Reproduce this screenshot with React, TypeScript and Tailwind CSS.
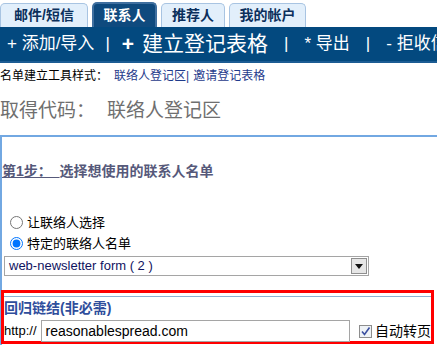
import React from "react";

const font = { fontFamily: '"Liberation Sans", "Noto Sans CJK SC", sans-serif' };

function Tab({ label, width, active }: { label: string; width: string; active?: boolean }) {
    if (active) {
        return (
            <div className={`${width} h-[25px] flex items-center justify-center rounded-t-[5px] bg-[#0f4a7e] border-2 border-b-0 border-[#3f6f9f] text-white font-bold text-[14px]`}>
                {label}
            </div>
        );
    }
    return (
        <div className={`${width} h-[24px] flex items-center justify-center rounded-t-[5px] bg-[#e2effb] border border-b-0 border-[#a8c4e2] text-[#0b2f5c] font-bold text-[14px]`}>
            {label}
        </div>
    );
}

export default function App() {
    return (
        <div className="w-[437px] h-[347px] overflow-hidden bg-white text-black" style={font}>
            {/* tabs */}
            <div className="h-[27px] flex items-end gap-[4px]">
                <Tab label="邮件/短信" width="w-[88px]" />
                <Tab label="联系人" width="w-[65px]" active />
                <Tab label="推荐人" width="w-[64px]" />
                <Tab label="我的帐户" width="w-[77px]" />
            </div>

            {/* action bar */}
            <div className="h-[36px] bg-[#03497f] border-b-2 border-[#1c5c93] flex items-center whitespace-nowrap text-white pl-[7px]">
                <span className="text-[17px]">+ 添加/导入</span>
                <span className="text-[17px] ml-[11px] mr-[12px]">|</span>
                <span className="text-[21px] font-bold mr-[6px]">+</span>
                <span className="text-[21px] ml-[2px]">建立登记表格</span>
                <span className="text-[17px] mx-[16px]">|</span>
                <span className="text-[17px]">* 导出</span>
                <span className="text-[17px] mx-[16px]">|</span>
                <span className="text-[17px]">- 拒收信件</span>
            </div>

            {/* sub links */}
            <div className="h-[26px] flex items-center text-[12px] whitespace-nowrap">
                <span>名单建立工具样式：</span>
                <span className="ml-[6px] text-[#1f3b8c]">联络人登记区</span>
                <span className="text-[#1f3b8c]">|</span>
                <span className="ml-[4px] text-[#1f3b8c]">邀请登记表格</span>
            </div>

            <div className="h-[44px] flex items-center text-[19px] text-[#6f6f6f] whitespace-nowrap">
                <span>取得代码：</span>
                <span className="ml-[12px]">联络人登记区</span>
            </div>

            {/* step box */}
            <div className="mt-[2px] border-t-2 border-l-2 border-[#72a8e2] h-[210px]">
                <div className="mt-[24px] text-[14px] font-bold text-[#56597a] whitespace-nowrap">
                    <span className="underline">第1步：&nbsp;&nbsp;</span>
                    <span>选择想使用的联系人名单</span>
                </div>

                <div className="mt-[32px] flex flex-col gap-[4px] pl-[8px] text-[13px]">
                    <label className="flex items-center gap-[4px] h-[17px]">
                        <input type="radio" name="pick" className="w-[13px] h-[13px] m-0" />
                        <span>让联络人选择</span>
                    </label>
                    <label className="flex items-center gap-[4px] h-[17px]">
                        <input type="radio" name="pick" defaultChecked className="w-[13px] h-[13px] m-0" />
                        <span>特定的联络人名单</span>
                    </label>
                </div>

                <div className="mt-[4px] ml-[2px] w-[365px] h-[20px] border border-[#a5a5a5] flex items-center justify-between">
                    <span className="pl-[4px] text-[13px] text-[#10135f]">web-newsletter form ( 2 )</span>
                    <span className="w-[16px] h-[16px] mr-[1px] border border-[#8f8f8f] bg-[#e6e6e6] flex items-center justify-center">
                        <svg width="8" height="5" viewBox="0 0 8 5">
                            <path d="M0 0h8L4 5z" fill="#111" />
                        </svg>
                    </span>
                </div>

                {/* red frame */}
                <div className="mt-[14px] -ml-[1px] w-[433px] h-[54px] border-[3px] border-[#ff0000] pt-[3px]">
                    <div className="border-t border-[#8eb0d2]" />
                    <div className="mt-[1px] text-[14px] font-bold text-[#2f4e9c] whitespace-nowrap">回归链结(非必需)</div>
                    <div className="mt-[1px] flex items-center whitespace-nowrap text-[13px]">
                        <span>http://</span>
                        <div className="ml-[4px] w-[315px] h-[22px] border border-[#a5a5a5] flex items-center pl-[4px] text-[14px]">
                            reasonablespread.com
                        </div>
                        <span className="ml-[9px] w-[13px] h-[13px] border border-[#8d8d8d] bg-[#eef2f6] flex items-center justify-center">
                            <svg width="11" height="11" viewBox="0 0 11 11">
                                <path d="M2 5.5l2.5 3L9.5 1.5" stroke="#3a4fa0" strokeWidth="1.6" fill="none" />
                            </svg>
                        </span>
                        <span className="ml-[3px] text-[14px]">自动转页</span>
                    </div>
                </div>
            </div>
        </div>
    );
}
